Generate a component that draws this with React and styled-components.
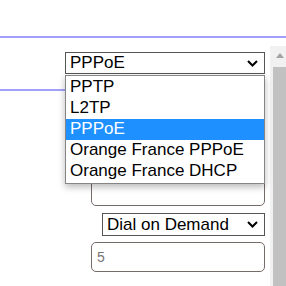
import React from "react";
import styled, { createGlobalStyle } from "styled-components";

const Global = createGlobalStyle`
  html, body { margin: 0; padding: 0; background: #fff; overflow: hidden; }
  body { font-family: "Liberation Sans", Arial, sans-serif; width: 286px; height: 286px; }
`;

const Page = styled.div`
  width: 286px;
  height: 286px;
  display: flex;
  flex-direction: column;
`;

const TopSpace = styled.div`
  height: 36px;
`;

const Rule = styled.div`
  height: 2px;
  background: #a29ffa;
  flex-shrink: 0;
  width: ${(p) => p.$width || "100%"};
  margin-top: ${(p) => p.$mt || 0}px;
  align-self: ${(p) => (p.$start ? "flex-start" : "auto")};
`;

const Main = styled.div`
  margin-top: 8px;
  flex: 1;
  display: flex;
  min-height: 0;
`;

const Content = styled.div`
  flex: 1;
  padding: 6px 5px 0 0;
  display: flex;
  flex-direction: column;
  align-items: flex-end;
`;

const Scrollbar = styled.div`
  width: 16px;
  background: #f1f1f1;
  display: flex;
  flex-direction: column;
`;

const ScrollButton = styled.div`
  height: 21px;
  display: flex;
  align-items: center;
  justify-content: center;
  padding-left: 4px;
  &::before {
    content: "";
    border-left: 4px solid transparent;
    border-right: 4px solid transparent;
    border-bottom: 5px solid #a3a3a3;
    margin-top: -3px;
  }
`;

const ScrollThumb = styled.div`
  flex: 1;
  margin-left: 3px;
  background: #c1c1c1;
`;

const SelectWrap = styled.div`
  position: relative;
  margin-top: ${(p) => p.$mt || 0}px;
`;

const SelectBox = styled.div`
  box-sizing: border-box;
  width: ${(p) => p.$w}px;
  height: ${(p) => p.$h || 22}px;
  border: 1px solid #555;
  background: #fff;
  display: flex;
  align-items: center;
  justify-content: space-between;
  padding: 0 6px 0 4px;
  font-size: 17px;
  color: #000;
  white-space: nowrap;
`;

const Chevron = () => (
  <svg width="11" height="7" viewBox="0 0 11 7">
    <path d="M1 1 L5.5 5.5 L10 1" fill="none" stroke="#000" strokeWidth="2" />
  </svg>
);

const List = styled.ul`
  position: absolute;
  top: calc(100% + 1px);
  left: 0;
  width: 200px;
  box-sizing: border-box;
  margin: 0;
  padding: 1px 0;
  list-style: none;
  background: #fff;
  border: 1px solid #858585;
  box-shadow: 0 3px 7px rgba(0, 0, 0, 0.28);
  z-index: 2;
`;

const Option = styled.li`
  height: 21px;
  line-height: 20px;
  padding-left: 4px;
  font-size: 17px;
  white-space: nowrap;
  background: ${(p) => (p.$active ? "#1e90ff" : "transparent")};
  color: ${(p) => (p.$active ? "#fff" : "#000")};
`;

const Field = styled.input`
  box-sizing: border-box;
  width: 174px;
  height: 30px;
  margin: ${(p) => p.$mt || 0}px 0 0 0;
  border: 1px solid #776b69;
  border-radius: 5px;
  padding: 0 5px;
  font-family: "Liberation Sans", Arial, sans-serif;
  font-size: 14px;
  color: #000;
  background: #fff;
  outline: none;
  &::placeholder { color: #757575; }
`;

const options = ["PPTP", "L2TP", "PPPoE", "Orange France PPPoE", "Orange France DHCP"];

export default function App() {
  return (
    <Page>
      <Global />
      <TopSpace />
      <Rule />
      <Main>
        <Content>
          <SelectWrap>
            <SelectBox $w={200}>
              <span>PPPoE</span>
              <Chevron />
            </SelectBox>
            <List>
              {options.map((o) => (
                <Option key={o} $active={o === "PPPoE"}>{o}</Option>
              ))}
            </List>
          </SelectWrap>
          <Rule $width="180px" $mt={15} $start />
          <Field $mt={11} />
          <Field $mt={7} />
          <Field $mt={7} />
          <SelectWrap $mt={7}>
            <SelectBox $w={163} $h={23}>
              <span>Dial on Demand</span>
              <Chevron />
            </SelectBox>
          </SelectWrap>
          <Field $mt={6} placeholder="5" />
        </Content>
        <Scrollbar>
          <ScrollButton />
          <ScrollThumb />
        </Scrollbar>
      </Main>
    </Page>
  );
}
